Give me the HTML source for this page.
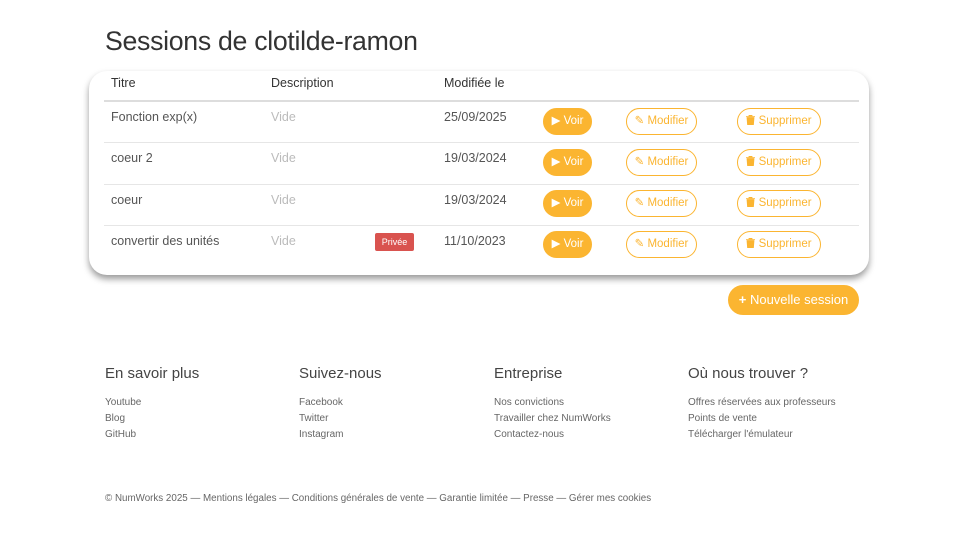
<!DOCTYPE html>
<html><head><meta charset="utf-8"><style>
*{margin:0;padding:0;box-sizing:border-box}
body{width:960px;height:540px;background:#fff;font-family:"Liberation Sans",sans-serif;color:#444;position:relative;overflow:hidden}
.a{position:absolute;white-space:nowrap}
h1{position:absolute;left:105px;top:26px;font-size:26.7px;font-weight:400;color:#333;letter-spacing:-0.3px}
.card{position:absolute;left:89px;top:71px;width:780px;height:204px;border-radius:18px;background:#fff;box-shadow:0 4px 7px rgba(0,0,0,.4)}
.line{position:absolute;left:104px;width:755px;height:1px;background:#e6e6e6}
.th{font-size:12.5px;color:#333}
.td{font-size:12.5px;color:#555}
.vide{font-size:12.5px;color:#bbb}
.btn{position:absolute;height:27px;border-radius:14px;font-size:11.5px;line-height:25px;text-align:center;color:#fbb531;border:1px solid #fbb531;background:#fff}
.voir{background:#fbb531;color:#fff}
.badge{position:absolute;left:375px;width:39px;height:18px;background:#d9534f;color:#fff;font-size:9px;line-height:18px;text-align:center;border-radius:2px}
.fh{font-size:15px;color:#444}
.fl{font-size:10px;color:#666}
svg{vertical-align:-1px}
</style></head><body>
<h1>Sessions de clotilde-ramon</h1>
<div class="card"></div>
<div class="a th" style="left:111px;top:76px">Titre</div>
<div class="a th" style="left:271px;top:76px">Description</div>
<div class="a th" style="left:444px;top:76px">Modifiée le</div>
<div class="line" style="top:100px;height:2px;background:#ddd"></div>
<div class="line" style="top:142px"></div>
<div class="line" style="top:184px"></div>
<div class="line" style="top:225px"></div>

<div class="a td" style="left:111px;top:110px">Fonction exp(x)</div>
<div class="a td" style="left:111px;top:151px">coeur 2</div>
<div class="a td" style="left:111px;top:193px">coeur</div>
<div class="a td" style="left:111px;top:234px">convertir des unités</div>
<div class="a vide" style="left:271px;top:110px">Vide</div>
<div class="a vide" style="left:271px;top:151px">Vide</div>
<div class="a vide" style="left:271px;top:193px">Vide</div>
<div class="a vide" style="left:271px;top:234px">Vide</div>
<div class="badge" style="top:233px">Privée</div>
<div class="a td" style="left:444px;top:110px">25/09/2025</div>
<div class="a td" style="left:444px;top:151px">19/03/2024</div>
<div class="a td" style="left:444px;top:193px">19/03/2024</div>
<div class="a td" style="left:444px;top:234px">11/10/2023</div>

<div class="btn voir" style="left:543px;top:108px;width:49px">▶ Voir</div>
<div class="btn" style="left:626px;top:108px;width:71px">✎ Modifier</div>
<div class="btn" style="left:737px;top:108px;width:84px"><svg width="9" height="10" viewBox="0 0 9 10"><path d="M0 1.5h9M3 1.5V0h3v1.5M1 2.5h7l-.6 7.5H1.6z" fill="#fbb531" stroke="#fbb531" stroke-width=".8"/></svg> Supprimer</div>
<div class="btn voir" style="left:543px;top:149px;width:49px">▶ Voir</div>
<div class="btn" style="left:626px;top:149px;width:71px">✎ Modifier</div>
<div class="btn" style="left:737px;top:149px;width:84px"><svg width="9" height="10" viewBox="0 0 9 10"><path d="M0 1.5h9M3 1.5V0h3v1.5M1 2.5h7l-.6 7.5H1.6z" fill="#fbb531" stroke="#fbb531" stroke-width=".8"/></svg> Supprimer</div>
<div class="btn voir" style="left:543px;top:190px;width:49px">▶ Voir</div>
<div class="btn" style="left:626px;top:190px;width:71px">✎ Modifier</div>
<div class="btn" style="left:737px;top:190px;width:84px"><svg width="9" height="10" viewBox="0 0 9 10"><path d="M0 1.5h9M3 1.5V0h3v1.5M1 2.5h7l-.6 7.5H1.6z" fill="#fbb531" stroke="#fbb531" stroke-width=".8"/></svg> Supprimer</div>
<div class="btn voir" style="left:543px;top:231px;width:49px">▶ Voir</div>
<div class="btn" style="left:626px;top:231px;width:71px">✎ Modifier</div>
<div class="btn" style="left:737px;top:231px;width:84px"><svg width="9" height="10" viewBox="0 0 9 10"><path d="M0 1.5h9M3 1.5V0h3v1.5M1 2.5h7l-.6 7.5H1.6z" fill="#fbb531" stroke="#fbb531" stroke-width=".8"/></svg> Supprimer</div>

<div class="btn voir" style="left:728px;top:285px;width:131px;height:30px;line-height:28px;border-radius:15px;font-size:13px"><b>+</b> Nouvelle session</div>

<div class="a fh" style="left:105px;top:365px">En savoir plus</div>
<div class="a fh" style="left:299px;top:365px">Suivez-nous</div>
<div class="a fh" style="left:494px;top:365px">Entreprise</div>
<div class="a fh" style="left:688px;top:365px">Où nous trouver ?</div>
<div class="a fl" style="left:105px;top:395px;line-height:16px">Youtube<br>Blog<br>GitHub</div>
<div class="a fl" style="left:299px;top:395px;line-height:16px">Facebook<br>Twitter<br>Instagram</div>
<div class="a fl" style="left:494px;top:395px;line-height:16px">Nos convictions<br>Travailler chez NumWorks<br>Contactez-nous</div>
<div class="a fl" style="left:688px;top:395px;line-height:16px">Offres réservées aux professeurs<br>Points de vente<br>Télécharger l'émulateur</div>
<div class="a fl" style="left:105px;top:493px;font-size:9.8px">© NumWorks 2025 — Mentions légales — Conditions générales de vente — Garantie limitée — Presse — Gérer mes cookies</div>
</body></html>
